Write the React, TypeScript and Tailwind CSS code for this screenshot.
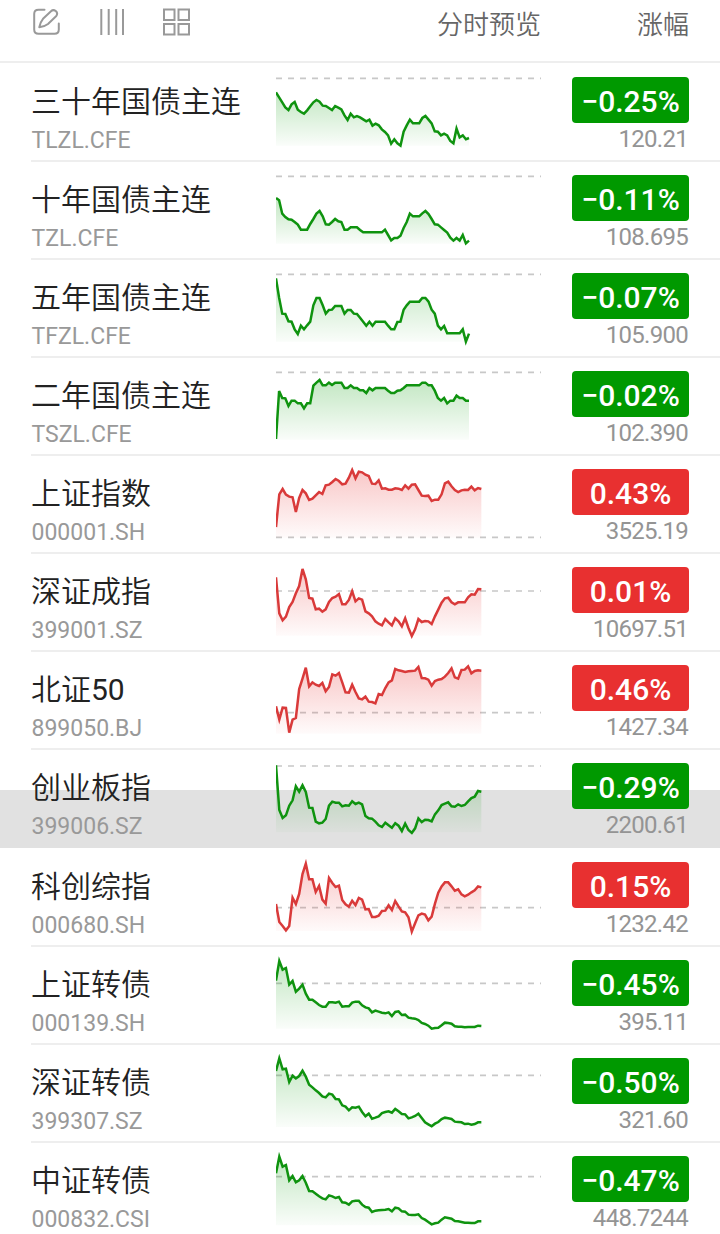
import React from "react";

interface Quote {
  name: string;
  code: string;
  change: string;
  price: string;
  up?: boolean;
  tall?: boolean;
  pressed?: boolean;
  origin?: number; // top of the plot window
  floor: number; // bottom of the shaded area
  prevClose: number;
  width: number;
  series: number[];
}

const FUTURES_WIDTH = 579;
const INDEX_WIDTH = 616;

const quotes: Quote[] = [
  {
    name: "三十年国债主连", code: "TLZL.CFE", change: "−0.25%", price: "120.21",
    floor: 227, prevClose: 25, width: FUTURES_WIDTH,
    series: [67,82,97,112,120,103,96,119,126,131,121,109,97,90,95,107,108,114,120,108,113,118,136,150,131,142,138,142,148,154,149,167,161,166,178,186,196,221,208,220,227,185,166,149,160,160,160,144,138,149,160,184,185,196,191,196,213,220,176,202,196,208,204],
  },
  {
    name: "十年国债主连", code: "TZL.CFE", change: "−0.11%", price: "108.695",
    floor: 227, prevClose: 25, width: FUTURES_WIDTH,
    series: [90,97,137,147,154,155,162,170,185,185,185,168,153,137,129,145,169,170,162,153,160,162,185,185,178,178,178,186,193,193,193,193,193,193,193,185,201,217,210,210,203,180,162,137,145,145,145,136,129,138,153,169,170,178,186,194,209,218,210,218,201,226,218],
  },
  {
    name: "五年国债主连", code: "TFZL.CFE", change: "−0.07%", price: "105.900",
    floor: 227, prevClose: 25, width: FUTURES_WIDTH,
    series: [37,95,143,144,166,167,190,204,179,190,178,167,118,96,96,118,143,132,131,120,120,120,143,132,132,143,144,155,167,179,167,179,167,167,167,167,179,190,190,168,167,131,118,107,107,107,107,96,96,107,131,143,179,190,180,202,202,202,202,202,190,227,203],
  },
  {
    name: "二年国债主连", code: "TSZL.CFE", change: "−0.02%", price: "102.390",
    floor: 227, prevClose: 25, width: FUTURES_WIDTH,
    series: [225,81,102,103,126,110,110,118,118,133,118,118,65,56,48,64,64,56,63,56,56,56,72,72,64,72,72,79,79,87,72,79,72,72,72,72,80,87,87,80,79,72,64,64,64,64,64,56,56,64,64,80,102,110,102,118,110,110,95,102,102,110,110],
  },
  {
    name: "上证指数", code: "000001.SH", change: "0.43%", price: "3525.19", up: true,
    floor: 227, prevClose: 226, width: INDEX_WIDTH,
    series: [195,97,81,98,104,106,150,108,84,94,114,110,100,90,96,70,68,60,51,57,67,65,47,24,49,29,31,38,42,65,66,55,80,79,83,83,79,80,84,70,80,68,67,84,101,102,101,117,113,113,97,64,59,73,84,90,85,83,84,74,85,78,81],
  },
  {
    name: "深证成指", code: "399001.SZ", change: "0.01%", price: "10697.51", up: true,
    floor: 227, prevClose: 93, width: INDEX_WIDTH,
    series: [52,160,181,170,141,126,100,78,27,58,114,116,148,146,155,148,126,114,110,102,133,133,120,94,124,115,119,154,160,169,184,191,196,177,187,196,175,184,199,175,204,228,208,177,186,183,184,192,169,149,128,115,113,127,133,127,127,127,112,103,104,87,88],
  },
  {
    name: "北证50", code: "899050.BJ", change: "0.46%", price: "1427.34", up: true,
    floor: 227, prevClose: 164, width: INDEX_WIDTH,
    series: [145,185,149,150,224,185,180,93,62,29,85,73,80,84,75,100,87,49,53,45,73,103,104,80,102,121,124,116,131,132,136,108,111,90,73,67,33,37,39,42,40,39,38,27,60,61,65,83,69,65,63,56,45,31,58,62,36,35,25,46,39,37,38],
  },
  {
    name: "创业板指", code: "399006.SZ", change: "−0.29%", price: "2200.61", tall: true, pressed: true,
    floor: 229, prevClose: 30, width: INDEX_WIDTH,
    series: [28,162,186,178,149,133,91,107,88,108,155,156,197,202,200,189,149,137,140,140,151,148,149,136,144,140,145,180,187,188,197,208,213,200,208,215,202,209,225,203,222,231,217,187,198,191,192,196,175,163,147,143,139,151,152,145,150,147,136,126,122,105,107],
  },
  {
    name: "科创综指", code: "000680.SH", change: "0.15%", price: "1232.42", up: true,
    origin: 3, floor: 231, prevClose: 161, width: INDEX_WIDTH,
    series: [150,204,216,229,216,131,150,120,60,29,76,76,114,96,137,149,72,87,99,95,138,151,158,140,153,132,137,166,165,189,189,185,171,170,154,168,141,157,172,175,190,233,208,184,179,182,199,188,149,116,97,85,85,97,110,106,121,127,122,115,109,97,100],
  },
  {
    name: "上证转债", code: "000139.SH", change: "−0.45%", price: "395.11",
    origin: 9, floor: 236, prevClose: 100, width: INDEX_WIDTH,
    series: [92,33,59,54,104,93,125,116,104,131,149,149,157,165,170,170,157,157,158,155,170,169,169,158,155,155,166,172,175,187,182,185,188,190,187,198,186,184,195,194,203,205,206,210,219,222,227,236,234,233,226,218,219,221,229,230,230,232,231,231,231,227,228],
  },
  {
    name: "深证转债", code: "399307.SZ", change: "−0.50%", price: "321.60",
    origin: 303, floor: 531, prevClose: 376, width: INDEX_WIDTH,
    series: [363,325,358,356,396,377,385,378,362,380,404,412,421,429,439,442,431,434,447,448,466,470,481,472,473,470,486,499,491,506,503,499,489,486,484,488,477,484,492,493,505,502,498,491,504,517,523,529,521,516,507,503,505,507,515,516,517,522,521,524,522,517,517],
  },
  {
    name: "中证转债", code: "000832.CSI", change: "−0.47%", price: "448.7244",
    origin: 597, floor: 826, prevClose: 680, width: INDEX_WIDTH,
    series: [670,620,650,645,691,678,697,691,678,698,723,724,731,739,745,748,736,739,744,741,757,758,764,754,752,752,764,771,773,786,782,781,780,779,777,784,773,775,784,785,794,795,795,793,804,809,816,823,820,818,809,802,804,806,813,814,816,818,818,819,819,814,814],
  },
];

function Sparkline({ quote }: { quote: Quote }) {
  const { series, width, floor, prevClose, up, origin = 0 } = quote;
  const step = width / (series.length - 1);
  const points = series.map((y, i) => `${(i * step).toFixed(1)},${y}`).join(" ");

  return (
    <svg className="mt-1.5 h-[90px] w-[265px] shrink-0" viewBox={`0 ${origin} 795 270`}>
      <line x1={0} x2={795} y1={prevClose} y2={prevClose} stroke="#c8c8c8" strokeWidth={5} strokeDasharray="18 18" />
      <polygon points={`0,${floor} ${points} ${width},${floor}`} fill={up ? "url(#fill-up)" : "url(#fill-down)"} />
      <polyline points={points} fill="none" stroke={up ? "#d93a3a" : "#0f930f"} strokeWidth={7.5} strokeLinejoin="miter" />
    </svg>
  );
}

// Digits in a name are set a little heavier than the characters
function QuoteName({ name }: { name: string }) {
  const digits = name.match(/\d+$/)?.[0] ?? "";
  return (
    <div className="h-11 text-[30px] leading-[44px] font-[350] whitespace-nowrap text-[#222222]">
      {name.slice(0, name.length - digits.length)}
      {digits && <span className="font-normal">{digits}</span>}
    </div>
  );
}

function QuoteRow({ quote }: { quote: Quote }) {
  return (
    <li className={`relative flex ${quote.tall ? "h-[99px]" : "h-[98px]"}`}>
      {quote.pressed && <div className="absolute inset-x-0 bottom-px h-[58px] bg-[#e1e1e1]" />}
      <div className={`relative ml-[31px] flex flex-1 border-b-2 ${quote.pressed ? "border-transparent" : "border-[#eeeeee]"}`}>
        <div className="w-[245px] shrink-0 pt-4">
          <QuoteName name={quote.name} />
          <div className="pt-px pl-[0.5px] text-[23px] leading-8 text-[#999999]">{quote.code}</div>
        </div>
        <Sparkline quote={quote} />
        <div className="mr-[31px] ml-auto flex flex-col items-end pt-[12.5px]">
          <div className={`h-[46px] w-[117px] rounded text-center text-[30px] leading-[49px] font-medium text-white ${quote.up ? "bg-[#e83030]" : "bg-[#009900]"}`}>
            {quote.change}
          </div>
          <div className="pr-px text-[24px] leading-8 tracking-[-0.7px] text-[#949494]">{quote.price}</div>
        </div>
      </div>
    </li>
  );
}

function Header() {
  return (
    <header className="flex h-[63px] border-b-2 border-[#eeeeee] text-[#666666]">
      <div className="flex gap-9 pt-2 pl-8 text-[#999999]">
        <svg className="h-7 w-7" viewBox="0 0 28 28" fill="none" stroke="currentColor" strokeWidth={2} strokeLinecap="round" strokeLinejoin="round">
          <path d="M12.5 1.8H6.5Q2.2 1.8 2.2 6V21.5Q2.2 25.8 6.5 25.8H22.5Q26.8 25.8 26.8 21.5V15.5" />
          <path d="M7.3 19.2Q8 14.5 11 10.8L19 3.2Q21.2 1.2 23.8 3Q26.2 5.2 24.3 8L16 16Q12 19 7.3 19.2Z" />
        </svg>
        <svg className="h-7 w-7" viewBox="0 0 28 28" fill="none" stroke="currentColor" strokeWidth={2}>
          <path d="M5.3 1V27M12.7 1V27M20.2 1V27M27 1V27" />
        </svg>
        <svg className="ml-0.5 h-7 w-7" viewBox="0 0 28 28" fill="none" stroke="currentColor" strokeWidth={2}>
          <rect x="2" y="1.5" width="10.5" height="10.5" />
          <rect x="16.5" y="1.5" width="10.5" height="10.5" />
          <rect x="2" y="16" width="10.5" height="10.5" />
          <rect x="16.5" y="16" width="10.5" height="10.5" />
        </svg>
      </div>
      <div className="ml-auto flex gap-24 pt-[5px] pr-[31px] text-[26px] leading-10 font-[350]">
        <span>分时预览</span>
        <span>涨幅</span>
      </div>
    </header>
  );
}

export default function App() {
  return (
    <main className="h-[1234px] w-[720px] overflow-hidden bg-white font-[Roboto,'Noto_Sans_CJK_SC',sans-serif]">
      <svg className="absolute h-0 w-0">
        <defs>
          <linearGradient id="fill-up" x1="0" y1="0" x2="0" y2="1">
            <stop offset="0%" stopColor="#e83030" stopOpacity={0.27} />
            <stop offset="100%" stopColor="#e83030" stopOpacity={0.02} />
          </linearGradient>
          <linearGradient id="fill-down" x1="0" y1="0" x2="0" y2="1">
            <stop offset="0%" stopColor="#009900" stopOpacity={0.24} />
            <stop offset="100%" stopColor="#009900" stopOpacity={0.02} />
          </linearGradient>
        </defs>
      </svg>
      <Header />
      <ul className="pt-px">
        {quotes.map((quote) => (
          <QuoteRow key={quote.code} quote={quote} />
        ))}
      </ul>
    </main>
  );
}
